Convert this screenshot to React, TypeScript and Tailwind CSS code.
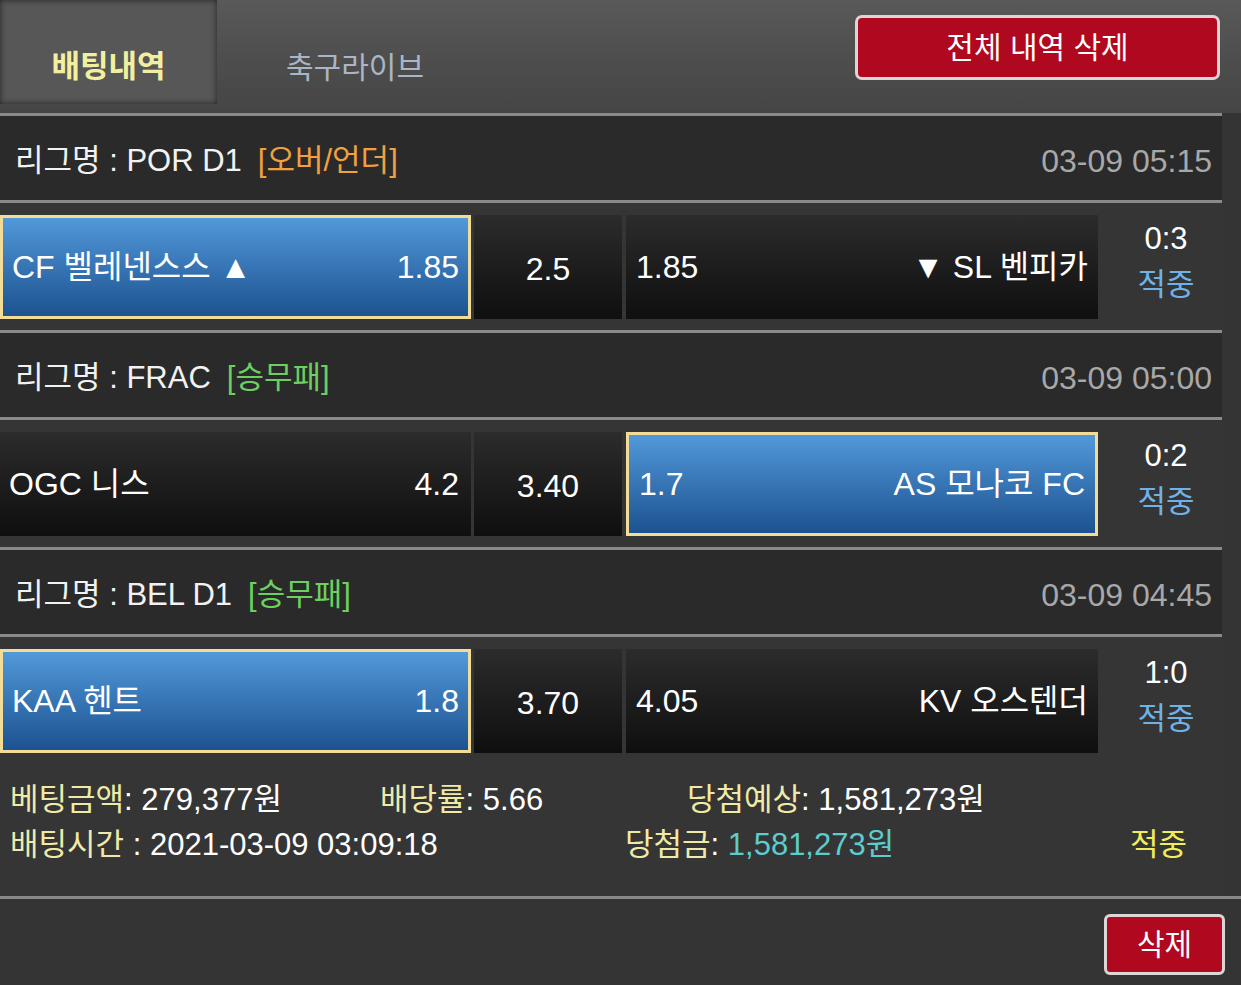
// 배팅내역 — bet history slip (3 matches + summary)
import React from 'react';

const FONT = { fontFamily: '"Liberation Sans", "Noto Sans CJK KR", sans-serif' };

interface Match {
  league: string;
  kind: string;
  kindColor: string;
  time: string;
  home: string;
  homeOdds: string;
  draw: string;
  awayOdds: string;
  away: string;
  pick: 'home' | 'away';
  score: string;
}

const matches: Match[] = [
  { league: 'POR D1', kind: '[오버/언더]', kindColor: 'text-[#f0a040]', time: '03-09 05:15', home: 'CF 벨레넨스스 ▲', homeOdds: '1.85', draw: '2.5', awayOdds: '1.85', away: '▼ SL 벤피카', pick: 'home', score: '0:3' },
  { league: 'FRAC', kind: '[승무패]', kindColor: 'text-[#6cd060]', time: '03-09 05:00', home: 'OGC 니스', homeOdds: '4.2', draw: '3.40', awayOdds: '1.7', away: 'AS 모나코 FC', pick: 'away', score: '0:2' },
  { league: 'BEL D1', kind: '[승무패]', kindColor: 'text-[#6cd060]', time: '03-09 04:45', home: 'KAA 헨트', homeOdds: '1.8', draw: '3.70', awayOdds: '4.05', away: 'KV 오스텐더', pick: 'home', score: '1:0' },
];

const selCell = 'border-[3px] border-[#f2dc98] bg-gradient-to-b from-[#5299da] to-[#1d5290]';
const darkCell = 'bg-gradient-to-b from-[#2c2c2c] to-[#0f0f0f]';

function MatchBlock({ m, last }: { m: Match; last: boolean }) {
  return (
    <>
      <div className="h-[3px] bg-[#8a8a8a]" />
      <div className="flex h-[84px] items-center justify-between bg-[#2a2a2a] pl-[15px] pr-[10px] pt-[6px] text-[31px]">
        <div className="text-[#f2f2f2]">
          리그명 : {m.league}
          <span className={`ml-[16px] ${m.kindColor}`}>{m.kind}</span>
        </div>
        <div className="text-[32px] text-[#a8a8a8]">{m.time}</div>
      </div>
      <div className="h-[3px] bg-[#8a8a8a]" />
      <div className={`flex items-center bg-[#353535] pt-[12px] ${last ? 'pb-[10px]' : 'pb-[11px]'}`}>
        <div className={`flex h-[104px] w-[471px] items-center justify-between text-[32px] text-white ${m.pick === 'home' ? `${selCell} pl-[9px] pr-[9px]` : `${darkCell} pl-[9px] pr-[12px]`}`}>
          <span>{m.home}</span>
          <span>{m.homeOdds}</span>
        </div>
        <div className={`ml-[3px] flex h-[104px] w-[148px] items-center justify-center pt-[4px] text-[32px] text-white ${darkCell}`}>
          {m.draw}
        </div>
        <div className={`ml-[4px] flex h-[104px] w-[472px] items-center justify-between text-[32px] text-white ${m.pick === 'away' ? `${selCell} pl-[10px] pr-[10px]` : `${darkCell} pl-[10px] pr-[10px]`}`}>
          <span>{m.awayOdds}</span>
          <span>{m.away}</span>
        </div>
        <div className="flex w-[124px] flex-col items-center pb-[10px] pl-[12px] text-[31px] leading-[46px]">
          <span className="text-white">{m.score}</span>
          <span className="text-[#6fb2e6]">적중</span>
        </div>
      </div>
    </>
  );
}

export default function App() {
  return (
    <div className="h-[985px] w-[1241px] overflow-hidden bg-[#343434]" style={FONT}>
      {/* header */}
      <div className="flex h-[113px] bg-gradient-to-b from-[#595959] via-[#4e4e4e] to-[#454545]">
        <div className="flex h-[104px] w-[217px] items-center justify-center bg-[#575757] pt-[30px] text-[31px] font-bold text-[#f2f0a0] shadow-[inset_0_0_6px_rgba(0,0,0,0.6)]">
          배팅내역
        </div>
        <div className="flex h-[104px] w-[276px] items-center justify-center pt-[30px] text-[30px] text-[#aab6c6]">
          축구라이브
        </div>
        <div className="ml-auto mr-[21px] mt-[15px]">
          <button className="h-[65px] w-[365px] rounded-[7px] border-[3px] border-[#ddd6d6] bg-[#b0081e] text-[30px] text-white">
            전체 내역 삭제
          </button>
        </div>
      </div>

      {/* matches */}
      <div className="w-[1222px]">
        {matches.map((m, i) => (
          <MatchBlock key={i} m={m} last={i === matches.length - 1} />
        ))}
        <div className="bg-[#353535] pl-[10px] pt-[14px] text-[31px] leading-[45px]">
          <div className="flex">
            <div className="w-[370px]">
              <span className="text-[#f0eaa8]">베팅금액</span>
              <span className="text-white">: 279,377원</span>
            </div>
            <div className="w-[307px]">
              <span className="text-[#f0eaa8]">배당률</span>
              <span className="text-white">: 5.66</span>
            </div>
            <div>
              <span className="text-[#f0eaa8]">당첨예상</span>
              <span className="text-white">: 1,581,273원</span>
            </div>
          </div>
          <div className="flex">
            <div className="w-[615px]">
              <span className="text-[#f0eaa8]">배팅시간</span>
              <span className="text-white"> : 2021-03-09 03:09:18</span>
            </div>
            <div className="w-[505px]">
              <span className="text-[#f0eaa8]">당첨금</span>
              <span className="text-white">: </span>
              <span className="text-[#5ccccc]">1,581,273원</span>
            </div>
            <div className="text-[#f2ee5a]">적중</div>
          </div>
        </div>
      </div>
      <div className="h-[29px] w-[1222px] bg-[#353535]" />
      <div className="h-[3px] bg-[#888888]" />
      <div className="flex justify-end pr-[16px] pt-[15px]">
        <button className="h-[61px] w-[121px] rounded-[6px] border-[3px] border-[#ddd6d6] bg-[#b0081e] text-[30px] text-white">
          삭제
        </button>
      </div>
    </div>
  );
}
